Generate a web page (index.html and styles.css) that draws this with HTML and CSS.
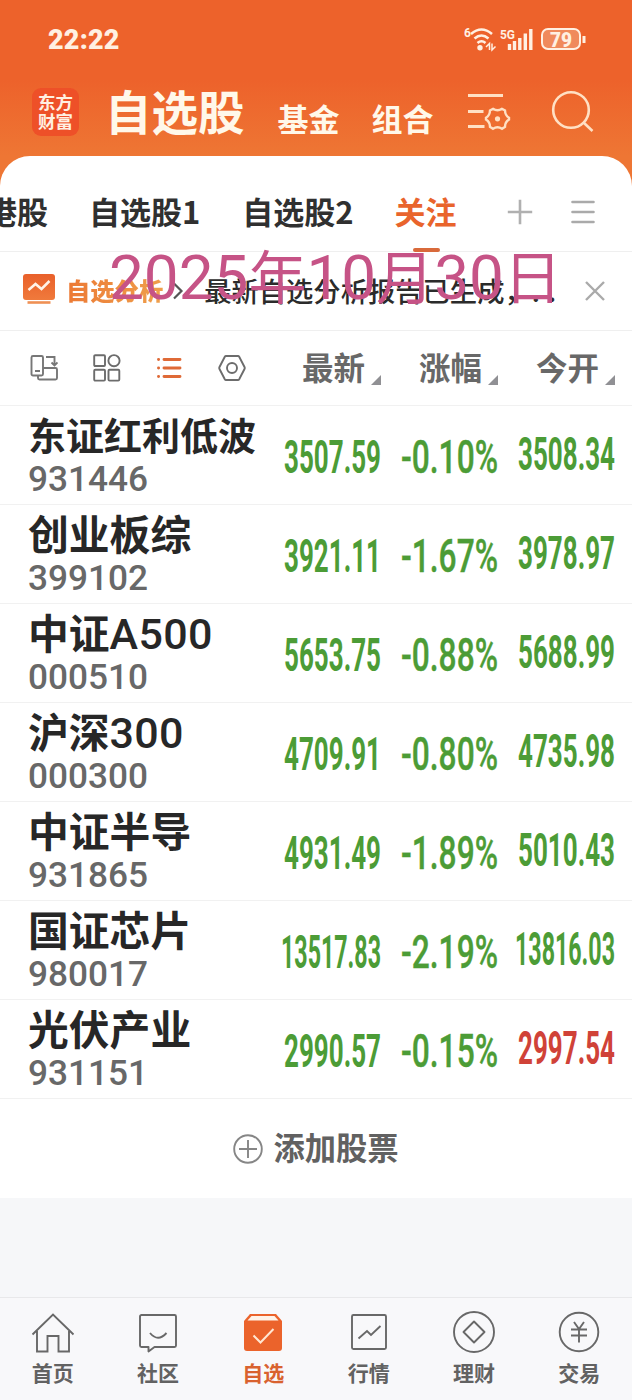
FILE: index.html
```
<!DOCTYPE html>
<html lang="zh-CN">
	<head>
		<meta charset="utf-8" />
		<title>自选股</title>
		<link rel="stylesheet" href="styles.css">
	</head>
	<body>
		<div class="top">
			<div class="status">
				<span class="time">22:22</span>
				<svg class="status-icons" width="124" height="30" viewBox="0 0 124 30">
					<g fill="none" stroke="#fff0e2" stroke-width="2.6">
						<path d="M7 9Q17.500 0 28 9"/>
						<path d="M10.500 13.500Q17.500 7.500 24.500 13.500"/>
						<path d="M13.500 18Q17.500 14.500 21.500 18"/>
					</g>
					<circle cx="16" cy="22.800" r="2.700" fill="#fff0e2"/>
					<path d="M22 22l3.500-3.500v6.500M28 18.500v6.500l3.500-3.500" fill="none" stroke="#fff0e2" stroke-width="1.500"/>
					<text x="0" y="12" class="tiny">6</text>
					<text x="36" y="14" class="tiny" textLength="15" lengthAdjust="spacingAndGlyphs">5G</text>
					<path d="M45.500 25v-6M50.500 25v-9M55.800 25v-12M61.300 25V8.500M66.800 25V4" stroke="#fff0e2" stroke-width="3.400"/>
					<rect x="78" y="4" width="38" height="20" rx="6" fill="#f08a5c" stroke="#fff0e2" stroke-width="2"/>
					<path d="M120 11v7" stroke="#fff0e2" stroke-width="3"/>
					<text x="86" y="21.500" class="battery" textLength="22" lengthAdjust="spacingAndGlyphs">79</text>
				</svg>
			</div>
			<div class="header">
				<div class="logo"><span>东方</span><span>财富</span></div>
				<span class="title">自选股</span>
				<span class="sub">基金</span>
				<span class="sub">组合</span>
				<svg class="filter" width="44" height="42" viewBox="0 0 44 42">
					<g fill="none" stroke="#ffe0c4" stroke-width="2.800">
						<path d="M1 5.500h35M1 21.500h15.500M1 36.500h16.500"/>
						<path d="M26 18.800q4.500 3 9 0l3 1.700q.200 5 4 7.300v1.700q-4 2.500-4 7.300l-3 2q-4.500-3-9 0l-3-2q0-4.800-4-7.300v-1.700q3.800-2.300 4-7.300z" stroke-width="2.400"/>
					</g>
					<circle cx="30.500" cy="28.800" r="2.600" fill="#ffe0c4"/>
				</svg>
				<svg class="search" width="44" height="44" viewBox="0 0 44 44">
					<g fill="none" stroke="#ffe0c4" stroke-width="2.600"><circle cx="20" cy="20" r="17.800"/><path d="M32 32l9.500 9"/></g>
				</svg>
			</div>
		</div>

		<div class="sheet">
			<div class="tabs">
				<span class="tab tab-hk">港股</span>
				<span class="tab tab-one">自选股1</span>
				<span class="tab tab-two">自选股2</span>
				<span class="tab active">关注</span>
				<svg class="plus" width="26" height="26" viewBox="0 0 26 26"><path d="M13 .8v24.400M.8 13h24.400" stroke="#b0b0b0" stroke-width="2.600"/></svg>
				<svg class="menu" width="24" height="26" viewBox="0 0 24 26"><path d="M1.500 3h21M1.500 13h21M1.500 23h21" stroke="#aaa" stroke-width="2.600" stroke-linecap="round"/></svg>
			</div>

			<div class="notice">
				<svg class="notice-icon" width="34" height="32" viewBox="0 0 34 32">
					<defs><linearGradient id="og" x1="0" y1="0" x2="0" y2="1"><stop offset="0" stop-color="#e9602a"/><stop offset="1" stop-color="#f07a3c"/></linearGradient></defs>
					<rect x="1" y="1" width="32" height="26" rx="3" fill="url(#og)"/>
					<path d="M6.500 17l7-6 6 5 8-8" fill="none" stroke="#fff3e8" stroke-width="2.500"/>
					<path d="M5.500 29.500h23" stroke="#ef9054" stroke-width="2.600"/>
				</svg>
				<span class="notice-name">自选分析</span>
				<svg class="chevron" width="12" height="18" viewBox="0 0 12 18"><path d="M2 1.500l7.500 7.500L2 16.500" fill="none" stroke="#555" stroke-width="2.200"/></svg>
				<span class="notice-text">最新自选分析报告已生成，.<i>.</i></span>
				<svg class="close" width="20" height="20" viewBox="0 0 20 20"><path d="M1 1l18 18M19 1L1 19" stroke="#aaa" stroke-width="2.400"/></svg>
				<!-- 日期水印 -->
				<div class="date">2025<b>年</b>10<b>月</b>30<b>日</b></div>
			</div>

			<div class="cols">
				<div class="tools">
					<svg width="28" height="28" viewBox="0 0 28 28">
						<g fill="none" stroke="#777" stroke-width="1.900"><path d="M8 21.500H3A1.500 1.500 0 0 1 1.500 20V3.500A1.500 1.500 0 0 1 3 2h8.500A1.500 1.500 0 0 1 13 3.500V20a1.500 1.500 0 0 1-1.500 1.500zM5 17h5M16 3h8.500v8M21.500 8.500l3 3 3-3M13 14h12.500a1.500 1.500 0 0 1 1.500 1.500v8.500a1.500 1.500 0 0 1-1.500 1.500h-16A1.500 1.500 0 0 1 8 24v-2.500"/></g>
					</svg>
					<svg width="28" height="28" viewBox="0 0 28 28">
						<g fill="none" stroke="#6c6c6c" stroke-width="1.900"><rect x="1.200" y="1.200" width="10.800" height="10.800" rx="1"/><circle cx="21" cy="6.700" r="5.600"/><rect x="1.200" y="15.800" width="10.800" height="10.800" rx="1"/><rect x="15.500" y="15.800" width="10.800" height="10.800" rx="1"/></g>
					</svg>
					<svg width="28" height="28" viewBox="0 0 28 28">
						<path d="M9 5.500h16M9 14h16M9 22.500h16M3.500 5.500h.1M3.500 14h.1M3.500 22.500h.1" stroke="#df6a37" stroke-width="2.900" stroke-linecap="round"/>
					</svg>
					<svg width="28" height="28" viewBox="0 0 28 28">
						<g fill="none" stroke="#6c6c6c" stroke-width="1.900" stroke-linejoin="round"><path d="M8 2h12q.800 0 1.200.7l5.300 10.300q.500 1 0 2L21.200 25.300q-.400.7-1.200.7H8q-.800 0-1.200-.7L1.500 15q-.500-1 0-2L6.800 2.700Q7.200 2 8 2z"/><circle cx="14" cy="14" r="5"/></g>
					</svg>
				</div>
				<span class="col">最新</span>
				<span class="col">涨幅</span>
				<span class="col">今开</span>
			</div>

			<div class="row">
				<div class="stock"><div class="name long">东证红利低波</div><div class="code">931446</div></div>
				<svg class="num"><text x="97" y="67" textLength="97" lengthAdjust="spacingAndGlyphs">3507.59</text></svg>
				<svg class="num pct"><text x="97" y="67" textLength="97" lengthAdjust="spacingAndGlyphs">-0.10%</text></svg>
				<svg class="num"><text x="97" y="64" textLength="97" lengthAdjust="spacingAndGlyphs">3508.34</text></svg>
			</div>
			<div class="row">
				<div class="stock"><div class="name">创业板综</div><div class="code">399102</div></div>
				<svg class="num"><text x="97" y="67" textLength="97" lengthAdjust="spacingAndGlyphs">3921.11</text></svg>
				<svg class="num pct"><text x="97" y="67" textLength="97" lengthAdjust="spacingAndGlyphs">-1.67%</text></svg>
				<svg class="num"><text x="97" y="64" textLength="97" lengthAdjust="spacingAndGlyphs">3978.97</text></svg>
			</div>
			<div class="row">
				<div class="stock"><div class="name">中证<em>A500</em></div><div class="code">000510</div></div>
				<svg class="num"><text x="97" y="67" textLength="97" lengthAdjust="spacingAndGlyphs">5653.75</text></svg>
				<svg class="num pct"><text x="97" y="67" textLength="97" lengthAdjust="spacingAndGlyphs">-0.88%</text></svg>
				<svg class="num"><text x="97" y="64" textLength="97" lengthAdjust="spacingAndGlyphs">5688.99</text></svg>
			</div>
			<div class="row">
				<div class="stock"><div class="name">沪深<em>300</em></div><div class="code">000300</div></div>
				<svg class="num"><text x="97" y="67" textLength="97" lengthAdjust="spacingAndGlyphs">4709.91</text></svg>
				<svg class="num pct"><text x="97" y="67" textLength="97" lengthAdjust="spacingAndGlyphs">-0.80%</text></svg>
				<svg class="num"><text x="97" y="64" textLength="97" lengthAdjust="spacingAndGlyphs">4735.98</text></svg>
			</div>
			<div class="row">
				<div class="stock"><div class="name">中证半导</div><div class="code">931865</div></div>
				<svg class="num"><text x="97" y="67" textLength="97" lengthAdjust="spacingAndGlyphs">4931.49</text></svg>
				<svg class="num pct"><text x="97" y="67" textLength="97" lengthAdjust="spacingAndGlyphs">-1.89%</text></svg>
				<svg class="num"><text x="97" y="64" textLength="97" lengthAdjust="spacingAndGlyphs">5010.43</text></svg>
			</div>
			<div class="row">
				<div class="stock"><div class="name">国证芯片</div><div class="code">980017</div></div>
				<svg class="num"><text x="97" y="67" textLength="100" lengthAdjust="spacingAndGlyphs">13517.83</text></svg>
				<svg class="num pct"><text x="97" y="67" textLength="97" lengthAdjust="spacingAndGlyphs">-2.19%</text></svg>
				<svg class="num"><text x="97" y="64" textLength="100" lengthAdjust="spacingAndGlyphs">13816.03</text></svg>
			</div>
			<div class="row">
				<div class="stock"><div class="name">光伏产业</div><div class="code">931151</div></div>
				<svg class="num"><text x="97" y="67" textLength="97" lengthAdjust="spacingAndGlyphs">2990.57</text></svg>
				<svg class="num pct"><text x="97" y="67" textLength="97" lengthAdjust="spacingAndGlyphs">-0.15%</text></svg>
				<svg class="num up"><text x="97" y="64" textLength="97" lengthAdjust="spacingAndGlyphs">2997.54</text></svg>
			</div>

			<div class="add">
				<svg width="30" height="30" viewBox="0 0 30 30"><g fill="none" stroke="#868686" stroke-width="1.900"><circle cx="15" cy="15" r="13.800"/><path d="M15 6v18M6 15h18"/></g></svg>
				<span>添加股票</span>
			</div>
		</div>

		<div class="nav">
			<div class="item">
				<svg width="44" height="44" viewBox="0 0 44 44"><g fill="none" stroke="#686868" stroke-width="1.900"><path d="M1.500 23.500L22 3.500l20.500 20M6 20v20.500h10.500V25h11v15.500H38V20"/></g></svg>
				<span>首页</span>
			</div>
			<div class="item">
				<svg width="44" height="44" viewBox="0 0 44 44"><g fill="none" stroke="#686868" stroke-width="1.900" stroke-linejoin="round"><path d="M5.500 4h33a1.500 1.500 0 0 1 1.500 1.500v29a1.500 1.500 0 0 1-1.500 1.500H18.500l-6 4.500V36h-7A1.500 1.500 0 0 1 4 34.500v-29A1.500 1.500 0 0 1 5.500 4z"/><path d="M14 22q8 9.500 16.500 0"/></g></svg>
				<span>社区</span>
			</div>
			<div class="item on">
				<svg width="44" height="44" viewBox="0 0 44 44"><path d="M9 3h26l6 7v27a3 3 0 0 1-3 3H6a3 3 0 0 1-3-3V10z" fill="#eb632b"/><path d="M10.500 5h23l4 4.500h-31z" fill="#fff3e8"/><path d="M12.500 24.500l7 7L32.500 18" fill="none" stroke="#ffe6d2" stroke-width="2"/></svg>
				<span>自选</span>
			</div>
			<div class="item">
				<svg width="44" height="44" viewBox="0 0 44 44"><g fill="none" stroke="#686868" stroke-width="1.900"><rect x="5" y="4" width="34" height="34" rx="1.500"/><path d="M11.500 27.500l8.500-7.500 4 4 9.500-9"/></g></svg>
				<span>行情</span>
			</div>
			<div class="item">
				<svg width="44" height="44" viewBox="0 0 44 44"><g fill="none" stroke="#686868" stroke-width="1.900"><circle cx="22" cy="21" r="20"/><path d="M22 10.500L32.500 21 22 31.500 11.500 21z" stroke-linejoin="round"/></g></svg>
				<span>理财</span>
			</div>
			<div class="item">
				<svg width="44" height="44" viewBox="0 0 44 44"><g fill="none" stroke="#686868" stroke-width="1.900"><circle cx="22" cy="21" r="19.300"/><path d="M17 11l5 7 5-7M14 18.500h16M14 24.500h16M22 18v13.500"/></g></svg>
				<span>交易</span>
			</div>
		</div>
	</body>
</html>
```

FILE: styles.css
```
*{margin: 0;padding: 0;box-sizing: border-box;}
body{width: 632px;height: 1400px;
	display: flex;
	flex-direction: column;
	overflow: hidden;
	background-color: #f6f7f9;
	font-family: "Noto Sans CJK SC",sans-serif;
	font-weight: 700;
	white-space: nowrap;
}
svg{display: block;flex: none;}
.top{height: 186px;flex: none;
	background: linear-gradient(#ed622b 0,#ed622b 80px,#ee7634 156px);
}
.status{height: 80px;
	display: flex;
	justify-content: space-between;
	padding: 25px 44px 0 48px;
}
.time{font: 900 27px/30px Roboto,sans-serif;
	letter-spacing: .2px;
	color: #fff0e2;
}
.tiny{font: 700 12px Roboto,sans-serif;fill: #fff0e2;}
.battery{font: 900 20px Roboto,sans-serif;fill: #fff0e2;}
.header{height: 76px;
	display: flex;
	align-items: flex-start;
	padding: 8px 0 0 32px;
}
.logo{width: 47px;height: 48px;
	border-radius: 9px;
	background-color: #ee5028;
	color: #fff0e2;
	font: 700 17.500px/19px "Noto Sans CJK SC",sans-serif;
	display: flex;
	flex-direction: column;
	align-items: center;
	padding-top: 4px;
}
.title{margin-left: 26px;
	font-size: 46.5px;
	line-height: 43px;
	font-weight: 700;
	color: #fff8ea;
}
.sub{margin-left: 33px;
	margin-top: 14px;
	font-size: 31px;
	line-height: 31px;
	font-weight: 700;
	color: #fff8ea;
}
.sub + .sub{margin-left: 32px;}
.filter{margin: 2px 0 0 33px;}
.search{margin: 2px 0 0 40px;}

.sheet{height: 1042px;flex: none;
	margin-top: -30px;
	border-radius: 30px 30px 0 0;
	background-color: #fff;
}
.tabs{height: 96px;
	display: flex;
	align-items: center;
	padding-top: 16px;
	border-bottom: 1px solid #efefef;
}
.tab{font-size: 31px;
	line-height: 78px;
	color: #303030;
	height: 80px;
}
.tab-hk{margin-left: -14px;}
.tab-one{margin-left: 41px;}
.tab-two{margin-left: 42px;}
.active{margin-left: 41px;
	color: #e9642c;
	position: relative;
}
.active::after{content: "";
	position: absolute;
	left: 18px;bottom: 0;
	width: 27px;height: 4px;
	border-radius: 2px;
	background-color: #d96a3b;
}
.plus{margin-left: 50px;}
.menu{margin-left: 38px;}
.notice{height: 79px;
	position: relative;
	display: flex;
	align-items: center;
	padding-left: 22px;
	border-bottom: 1px solid #efefef;
}
.notice-icon{margin-top: -4px;}
.notice-name{margin: -4px 0 0 10px;
	font-size: 24.3px;
	font-weight: 900;
	background: linear-gradient(100deg,#ec7834,#efa04c);
	-webkit-background-clip: text;
	background-clip: text;
	color: transparent;
}
.chevron{margin-left: 9px;}
.notice-text{width: 355px;
	margin: -3px 0 0 20px;
	font-size: 27.3px;
	font-weight: 500;
	color: #2b2b2b;
}
.notice-text i{font-style: normal;margin-left: 8px;}
.close{margin-left: 26px;}
.date{position: absolute;
	left: 109px;top: -16px;
	font: 400 62px/84px Roboto,"Noto Sans CJK SC",sans-serif;
	color: #c65386;
}
.date b{font-weight: 400;font-size: 58px;}
.cols{height: 75px;
	display: flex;
	align-items: center;
	padding: 0 17px 0 30px;
	border-bottom: 1px solid #f1f1f1;
}
.tools{display: flex;flex: none;gap: 34.5px;width: 234px;}
.col{width: 117px;
	flex: none;
	justify-content: flex-end;
	font-size: 31.5px;
	line-height: 71px;
	height: 75px;
	color: #686868;
	display: flex;
	align-items: flex-start;
}
.col::after{content: "";
	margin: 44px 0 0 6px;
	border-left: 10px solid transparent;
	border-bottom: 10px solid #909094;
}
.row{height: 99px;
	display: grid;
	grid-template-columns: 1fr 97px 97px 97px;
	column-gap: 20px;
	padding: 0 17px 0 28px;
	border-bottom: 1px solid #f1f1f1;
}
.name{height: 58px;
	font-size: 40.8px;
	line-height: 55px;
	color: #272727;
}
.long{font-size: 38px;}
.name em{font: 500 43px/55px Roboto,sans-serif;letter-spacing: .3px;}
.code{font: 500 35.2px/30px Roboto,sans-serif;
	color: #686868;
}
.num{width: 97px;height: 98px;overflow: visible;}
.num text{font: 700 46px Roboto,sans-serif;
	fill: #4c9c36;
	text-anchor: end;
}
.pct text{font-weight: 500;stroke: #4c9c36;stroke-width: .4px;}
.up text{fill: #d04238;}
.add{height: 99px;
	display: flex;
	align-items: center;
	justify-content: center;
	gap: 10px;
	font-size: 31.3px;
	color: #616161;
}
.add span{margin-top: -4px;}
.nav{height: 103px;
	margin-top: auto;
	display: flex;
	background-color: #f8f8fa;
	border-top: 1px solid #e8e8ea;
	padding-top: 13px;
}
.item{flex: 1;
	display: flex;
	flex-direction: column;
	align-items: center;
	font-size: 21px;
	line-height: 35px;
	color: #626262;
}
.on{color: #d9622f;}
```
